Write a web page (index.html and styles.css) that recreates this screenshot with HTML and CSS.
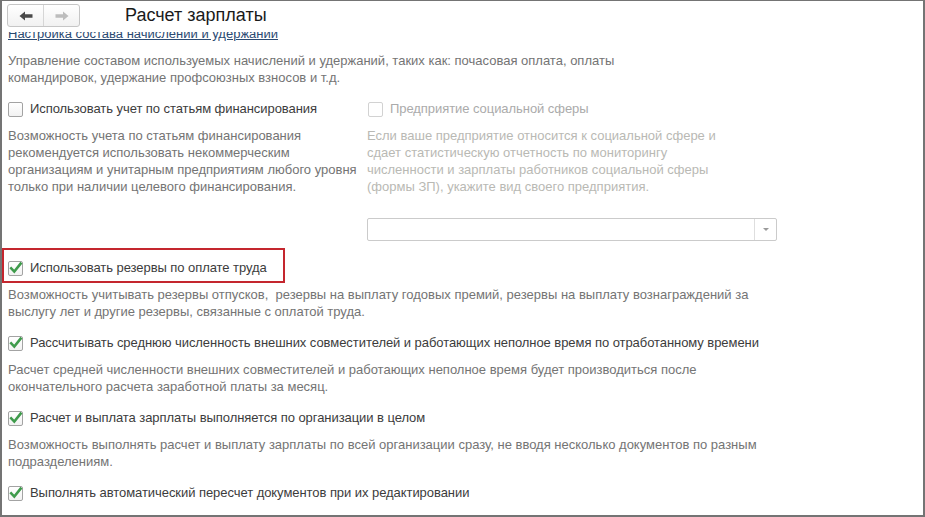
FILE: index.html
```html
<!DOCTYPE html>
<html lang="ru">
<head>
<meta charset="utf-8">
<title>Расчет зарплаты</title>
<link rel="stylesheet" href="styles.css">
</head>
<body>
<div class="window">
  <header class="topbar">
    <div class="nav">
      <button class="nav-btn nav-back" type="button" aria-label="Назад">
        <svg width="14" height="10" viewBox="0 0 14 10"><path d="M0.5 5 L6 0.5 L6 3.2 L13.5 3.2 L13.5 6.8 L6 6.8 L6 9.5 Z" fill="#4a4a4a"/></svg>
      </button>
      <button class="nav-btn nav-fwd" type="button" aria-label="Вперед">
        <svg width="14" height="10" viewBox="0 0 14 10"><path d="M13.5 5 L8 0.5 L8 3.2 L0.5 3.2 L0.5 6.8 L8 6.8 L8 9.5 Z" fill="#bdbdbd"/></svg>
      </button>
    </div>
    <h1 class="title">Расчет зарплаты</h1>
  </header>

  <main class="content">
    <div class="scroll">
      <a class="link" href="#">Настройка состава начислений и удержаний</a>
      <p class="desc intro">Управление составом используемых начислений и удержаний, таких как: почасовая оплата, оплаты<br>командировок, удержание профсоюзных взносов и т.д.</p>

      <div class="two-col">
        <div class="col">
          <label class="check">
            <span class="box"></span>
            <span class="label">Использовать учет по статьям финансирования</span>
          </label>
          <p class="desc">Возможность учета по статьям финансирования<br>рекомендуется использовать некоммерческим<br>организациям и унитарным предприятиям любого уровня<br>только при наличии целевого финансирования.</p>
        </div>
        <div class="col col-right is-disabled">
          <label class="check">
            <span class="box"></span>
            <span class="label">Предприятие социальной сферы</span>
          </label>
          <p class="desc">Если ваше предприятие относится к социальной сфере и<br>сдает статистическую отчетность по мониторингу<br>численности и зарплаты работников социальной сферы<br>(формы ЗП), укажите вид своего предприятия.</p>
          <div class="select">
            <span class="select-value"></span>
            <span class="select-btn"><span class="caret"></span></span>
          </div>
        </div>
      </div>

      <section class="option option-reserve">
        <div class="highlighted">
          <label class="check">
            <span class="box checked"><svg viewBox="0 0 15 15" width="15" height="15"><path d="M3.2 7.3 L6.3 10.6 L12.6 2.6" fill="none" stroke="#3f9b4c" stroke-width="2.6" stroke-linecap="square"/></svg></span>
            <span class="label">Использовать резервы по оплате труда</span>
          </label>
          <span class="mark"></span>
        </div>
        <p class="desc">Возможность учитывать резервы отпусков,&nbsp; резервы на выплату годовых премий, резервы на выплату вознаграждений за<br>выслугу лет и другие резервы, связанные с оплатой труда.</p>
      </section>

      <section class="option">
        <label class="check">
          <span class="box checked"><svg viewBox="0 0 15 15" width="15" height="15"><path d="M3.2 7.3 L6.3 10.6 L12.6 2.6" fill="none" stroke="#3f9b4c" stroke-width="2.6" stroke-linecap="square"/></svg></span>
          <span class="label">Рассчитывать среднюю численность внешних совместителей и работающих неполное время по отработанному времени</span>
        </label>
        <p class="desc">Расчет средней численности внешних совместителей и работающих неполное время будет производиться после<br>окончательного расчета заработной платы за месяц.</p>
      </section>

      <section class="option">
        <label class="check">
          <span class="box checked"><svg viewBox="0 0 15 15" width="15" height="15"><path d="M3.2 7.3 L6.3 10.6 L12.6 2.6" fill="none" stroke="#3f9b4c" stroke-width="2.6" stroke-linecap="square"/></svg></span>
          <span class="label">Расчет и выплата зарплаты выполняется по организации в целом</span>
        </label>
        <p class="desc">Возможность выполнять расчет и выплату зарплаты по всей организации сразу, не вводя несколько документов по разным<br>подразделениям.</p>
      </section>

      <section class="option">
        <label class="check">
          <span class="box checked"><svg viewBox="0 0 15 15" width="15" height="15"><path d="M3.2 7.3 L6.3 10.6 L12.6 2.6" fill="none" stroke="#3f9b4c" stroke-width="2.6" stroke-linecap="square"/></svg></span>
          <span class="label">Выполнять автоматический пересчет документов при их редактировании</span>
        </label>
        <p class="desc">Возможность автоматического пересчета документов при изменении данных в них. Без пересчета документы<br>заполняются по команде пользователя.</p>
      </section>
    </div>
  </main>
</div>
</body>
</html>
```

FILE: styles.css
```css
* {
  box-sizing: border-box;
}

html, body {
  margin: 0;
  padding: 0;
  background: #ffffff;
}

body {
  width: 925px;
  height: 517px;
  overflow: hidden;
  font-family: "Liberation Sans", Arial, sans-serif;
  font-size: 13px;
  line-height: 17px;
  color: #3a3a3a;
}

.window {
  width: 925px;
  height: 517px;
  border-style: solid;
  border-color: #747474;
  border-width: 1px 2px 2px 2px;
  background: #ffffff;
  display: flex;
  flex-direction: column;
  overflow: hidden;
}

/* ---------- header ---------- */
.topbar {
  flex: 0 0 31px;
  height: 31px;
  display: flex;
  align-items: flex-start;
  padding: 3px 0 0 5px;
  background: #ffffff;
  position: relative;
  z-index: 2;
}

.nav {
  display: flex;
  width: 73px;
  height: 23px;
  border: 1px solid #c6c6c6;
  border-radius: 3px;
  background: linear-gradient(#ffffff, #f1f1f1);
  overflow: hidden;
}

.nav-btn {
  flex: 1 1 0;
  height: 100%;
  border: 0;
  margin: 0;
  padding: 0;
  background: transparent;
  display: flex;
  align-items: center;
  justify-content: center;
}

.nav-back {
  border-right: 1px solid #d6d6d6;
}

.nav-btn svg {
  display: block;
}

.title {
  margin: 1px 0 0 45px;
  font-size: 18px;
  line-height: 21px;
  font-weight: normal;
  color: #1a1a1a;
}

/* ---------- content ---------- */
.content {
  flex: 1 1 auto;
  overflow: hidden;
  padding: 0 0 0 6px;
}

.scroll {
  margin-top: -7px;
}

.link {
  display: inline-block;
  color: #2b4a72;
  text-decoration: underline;
  line-height: 17px;
}

.desc {
  margin: 0;
  white-space: nowrap;
  color: #747474;
}

.intro {
  margin-top: 10px;
}

.two-col {
  display: grid;
  grid-template-columns: 359px 410px;
  margin-top: 14px;
}

.col .desc {
  margin-top: 10px;
}

.col-right .check {
  margin-left: 1px;
}

.is-disabled .label {
  color: #ababab;
}

.is-disabled .desc {
  color: #b9b9b4;
}

.is-disabled .box {
  border-color: #d2d2d2;
  background: #ffffff;
}

/* checkbox rows */
.check {
  display: flex;
  align-items: flex-start;
  height: 17px;
  white-space: nowrap;
}

.box {
  flex: 0 0 15px;
  width: 15px;
  height: 15px;
  margin-top: 2px;
  margin-right: 7px;
  border: 1px solid #a3a3a3;
  border-radius: 2px;
  background: linear-gradient(#ffffff, #f2f2f2);
  position: relative;
}

.box.checked svg {
  position: absolute;
  left: -1px;
  top: -1px;
}

.label {
  color: #3c3c3c;
  letter-spacing: -0.06px;
}

/* select */
.select {
  display: flex;
  width: 410px;
  height: 23px;
  margin-top: 23px;
  border: 1px solid #cbcbcb;
  border-radius: 2px;
  background: #ffffff;
}

.select-value {
  flex: 1 1 auto;
}

.select-btn {
  flex: 0 0 22px;
  border-left: 1px solid #dedede;
  display: flex;
  align-items: center;
  justify-content: center;
}

.caret {
  width: 0;
  height: 0;
  border-left: 3px solid transparent;
  border-right: 3px solid transparent;
  border-top: 3px solid #9a9a9a;
}

/* options */
.option {
  margin-top: 14px;
}

.option .desc {
  margin-top: 10px;
}

.option-reserve {
  margin-top: 18px;
}

.highlighted {
  position: relative;
}

.mark {
  position: absolute;
  left: -6px;
  top: -11px;
  width: 283px;
  height: 35px;
  border: 2px solid #c4262e;
  pointer-events: none;
}
```
